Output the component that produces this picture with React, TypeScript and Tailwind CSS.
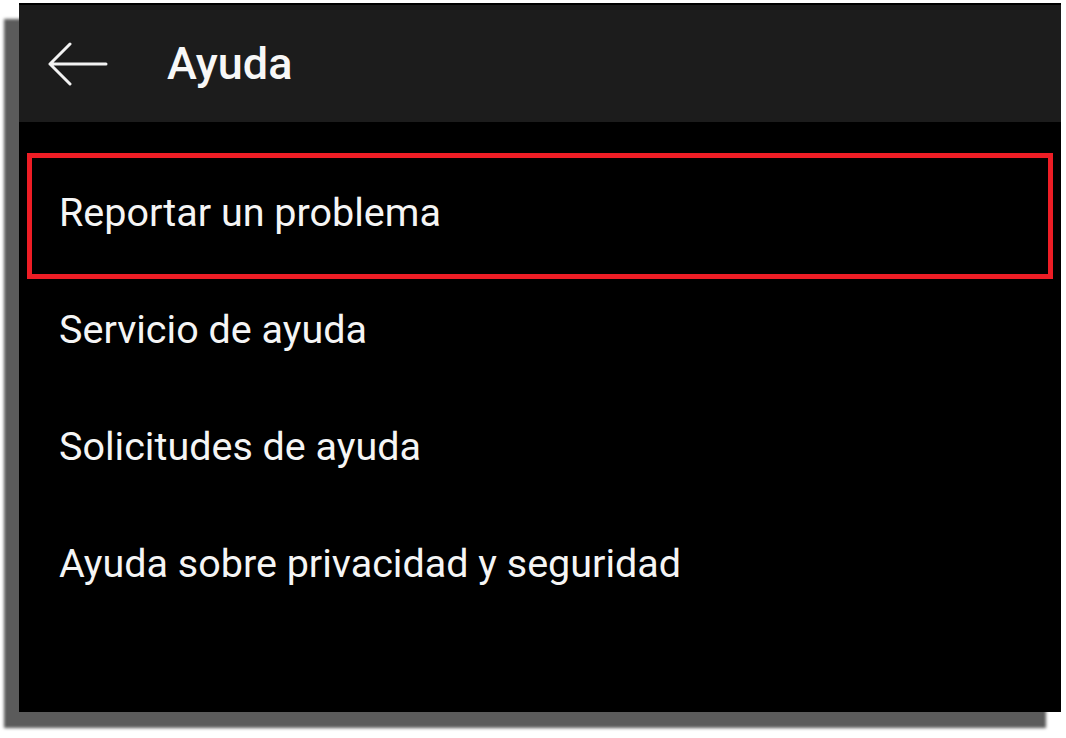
import React from "react";

export default function App() {
  const items = ["Servicio de ayuda", "Solicitudes de ayuda", "Ayuda sobre privacidad y seguridad"];
  return (
    <div className="w-[1066px] h-[738px] bg-white overflow-hidden" style={{ fontFamily: "Roboto, 'Noto Sans', sans-serif" }}>
      <div className="ml-[19px] mt-[3px] w-[1042px] h-[709px] bg-black flex flex-col shadow-[-15px_16px_3px_#5b5b5b]">
        <header className="h-[119px] border-t-2 border-black bg-[#1c1c1c] flex items-center">
          <svg className="ml-[28px] mt-[2px]" width="62" height="46" viewBox="0 0 62 46" fill="none">
            <path d="M59 22H3M23 2L3 22L23 42" stroke="#f2f2f2" strokeWidth="3" strokeLinecap="round" strokeLinejoin="round" />
          </svg>
          <h1 className="ml-[58px] text-[45px] font-medium text-[#f7f7f7] leading-none mb-[1px]">Ayuda</h1>
        </header>
        <div className="px-[8px] pt-[31px] flex flex-col">
          <div className="h-[126px] border-[5px] border-[#ee1d25] flex items-center pl-[27px] pb-[6px]">
            <span className="text-[39.5px] leading-[48px] text-[#f5f5f5]">Reportar un problema</span>
          </div>
          <div className="mt-[27px] flex flex-col gap-[69px] pl-[32px]">
            {items.map((t) => (
              <span key={t} className="text-[39.5px] leading-[48px] text-[#f5f5f5]">{t}</span>
            ))}
          </div>
        </div>
      </div>
    </div>
  );
}
